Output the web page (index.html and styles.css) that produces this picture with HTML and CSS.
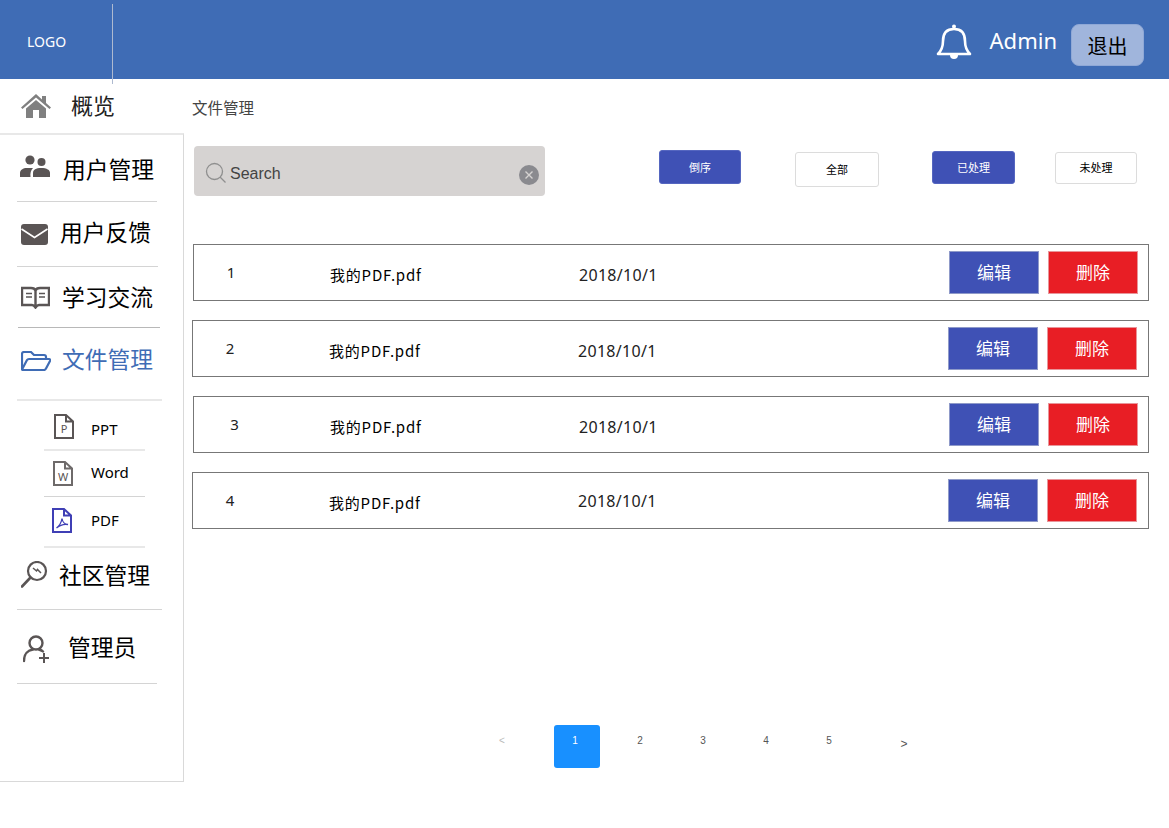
FILE: index.html
```html
<!DOCTYPE html>
<html lang="zh-CN">
<head>
  <meta charset="UTF-8">
  <title>文件管理</title>
  <link rel="stylesheet" href="styles.css">
</head>
<body>
  <!-- Header -->
  <div class="header">
    <div class="logo">LOGO</div>
    <div class="header-line"></div>
    <svg class="bell" width="36" height="38" viewBox="0 0 36 38">
      <path d="M2 31 C6 27 7 24 7 18 C7 10 11 6 18 6 C25 6 29 10 29 18 C29 24 30 27 34 31 Z" fill="none" stroke="#fff" stroke-width="2.6" stroke-linejoin="round"/>
      <circle cx="18" cy="3.6" r="2" fill="#fff"/>
      <path d="M14 32 a4 4 0 0 0 8 0 Z" fill="#fff"/>
    </svg>
    <span class="admin-name">Admin</span>
    <button class="logout">退出</button>
  </div>

  <div class="main">
    <!-- Sidebar -->
    <div class="sidebar">
      <div class="nav-home">
        <svg width="30" height="24" viewBox="0 0 30 24">
          <path d="M15 0 L0 13.5 L1.5 15 L15 3.5 L28.5 15 L30 13.5 L25 9 V2 H21 V5.5 Z" fill="#808080"/>
          <path d="M5 14.5 L15 6 L25 14.5 V24 H18 V16 H12 V24 H5 Z" fill="#808080"/>
        </svg>
        <span>概览</span>
      </div>
      <div class="nav-box">
        <div class="nav-item nav-users">
          <svg width="30" height="22" viewBox="0 0 30 22">
            <circle cx="10" cy="5" r="4.6" fill="#5a5555"/>
            <circle cx="21.5" cy="7" r="4" fill="#5a5555"/>
            <path d="M0 22 V18 C0 15 3 13 7 13 H13 C11 15 10 18 10.5 22 Z" fill="#5a5555"/>
            <path d="M13 22 V18 C13 14.500 16 13 21 13 C27 13 30 15 30 18 V22 Z" fill="#5a5555"/>
          </svg>
          <span>用户管理</span>
        </div>
        <div class="nav-item nav-feedback">
          <svg width="27" height="21" viewBox="0 0 27 21">
            <rect width="27" height="21" rx="3" fill="#5a5555"/>
            <path d="M0.500 5 L13.500 13.500 L26.500 5" fill="none" stroke="#fff" stroke-width="1.6"/>
          </svg>
          <span>用户反馈</span>
        </div>
        <div class="nav-item nav-study">
          <svg width="29" height="23" viewBox="0 0 29 23">
            <path d="M1 2 H10 C12 2 14 3 14.500 4.500 C15 3 17 2 19 2 H28 V19 H18 C16.500 19 15.500 20 14.500 21.500 C13.500 20 12.500 19 11 19 H1 Z M14.500 4.500 V21" fill="none" stroke="#5a5555" stroke-width="2.400"/>
            <path d="M5 7.500 H11 M5 11 H11 M18 7.500 H24 M18 11 H24" stroke="#5a5555" stroke-width="1.500"/>
          </svg>
          <span>学习交流</span>
        </div>
        <div class="nav-item nav-files">
          <svg width="30" height="20" viewBox="0 0 30 20">
            <path d="M1 18 V3 C1 2 2 1 3 1 H10 L13 4 H23 C24 4 25 5 25 6 V8" fill="none" stroke="#3f6cb5" stroke-width="2.200" stroke-linejoin="round"/>
            <path d="M1 18.500 L6 9 C6.500 8 7 8 8 8 H28 C29 8 29.500 9 29 10 L25 17.500 C24.500 18.500 24 19 23 19 H2 C1.500 19 1 19 1 18.500 Z" fill="none" stroke="#3f6cb5" stroke-width="2.200" stroke-linejoin="round"/>
          </svg>
          <span class="nav-active">文件管理</span>
        </div>
        <div class="sub-item sub-ppt">
          <svg width="20" height="25" viewBox="0 0 20 25">
            <path d="M1 1 H12 L19 7.500 V24 H1 Z M12 1 V7.500 H19" fill="none" stroke="#5a5555" stroke-width="2"/>
            <text x="10" y="19" class="file-letter" fill="#5a5555">P</text>
          </svg>
          <span>PPT</span>
        </div>
        <div class="sub-item sub-word">
          <svg width="20" height="25" viewBox="0 0 20 25">
            <path d="M1 1 H12 L19 7.500 V24 H1 Z M12 1 V7.500 H19" fill="none" stroke="#6e6a6a" stroke-width="2"/>
            <text x="10" y="20" class="file-letter" fill="#5a5555">W</text>
          </svg>
          <span>Word</span>
        </div>
        <div class="sub-item sub-pdf">
          <svg width="20" height="25" viewBox="0 0 20 25">
            <path d="M1 1 H12 L19 7.500 V24 H1 Z M12 1 V7.500 H19" fill="none" stroke="#3f3fb5" stroke-width="2"/>
            <path d="M4.500 20 C7 18 9.500 14 10 10.500 C10.500 14 13 16.500 16 16.500 C13 16 8 17 4.500 20 Z" fill="none" stroke="#3f3fb5" stroke-width="1.300"/>
          </svg>
          <span>PDF</span>
        </div>
        <div class="nav-item nav-community">
          <svg width="27" height="27" viewBox="0 0 27 27">
            <circle cx="16" cy="10" r="9" fill="none" stroke="#5a5555" stroke-width="2.200"/>
            <path d="M9.500 16.500 L1 25.500" stroke="#5a5555" stroke-width="2.600" stroke-linecap="round"/>
            <path d="M12 7 L15.500 10 L16.500 8.500 L20 12" fill="none" stroke="#5a5555" stroke-width="1.500"/>
          </svg>
          <span>社区管理</span>
        </div>
        <div class="nav-item nav-manager">
          <svg width="26" height="28" viewBox="0 0 26 28">
            <circle cx="13" cy="8" r="6.500" fill="none" stroke="#5a5555" stroke-width="2.400"/>
            <path d="M1 26 C1 19 5 15 10 14.500 M16 14.500 C17.500 15 19 15.500 20 16.500" fill="none" stroke="#5a5555" stroke-width="2.400" stroke-linecap="round"/>
            <path d="M21 18 V28 M16 23 H26" stroke="#5a5555" stroke-width="2"/>
          </svg>
          <span>管理员</span>
        </div>
      </div>
    </div>

    <!-- Content -->
    <div class="content">
      <div class="crumb">文件管理</div>

      <div class="toolbar">
        <div class="search">
          <svg width="22" height="22" viewBox="0 0 22 22">
            <circle cx="9.500" cy="9.500" r="8" fill="none" stroke="#8f8f8f" stroke-width="1.300"/>
            <path d="M15 15 L20.500 20.500" stroke="#8f8f8f" stroke-width="1.300"/>
          </svg>
          <span class="search-text">Search</span>
          <svg class="search-clear" width="20" height="20" viewBox="0 0 20 20">
            <circle cx="10" cy="10" r="10" fill="#8a8a8f"/>
            <path d="M6.500 6.500 L13.500 13.500 M13.500 6.500 L6.500 13.500" stroke="#d6d3d2" stroke-width="1.400"/>
          </svg>
        </div>
        <button class="tool-btn tool-sort">倒序</button>
        <button class="tool-btn tool-all">全部</button>
        <button class="tool-btn tool-done">已处理</button>
        <button class="tool-btn tool-todo">未处理</button>
      </div>

      <div class="file-list">
        <div class="file-row">
          <div class="row-num">1</div>
          <div class="row-name">我的PDF.pdf</div>
          <div class="row-date">2018/10/1</div>
          <button class="row-btn btn-edit">编辑</button>
          <button class="row-btn btn-del">删除</button>
        </div>
        <div class="file-row">
          <div class="row-num">2</div>
          <div class="row-name">我的PDF.pdf</div>
          <div class="row-date">2018/10/1</div>
          <button class="row-btn btn-edit">编辑</button>
          <button class="row-btn btn-del">删除</button>
        </div>
        <div class="file-row">
          <div class="row-num">3</div>
          <div class="row-name">我的PDF.pdf</div>
          <div class="row-date">2018/10/1</div>
          <button class="row-btn btn-edit">编辑</button>
          <button class="row-btn btn-del">删除</button>
        </div>
        <div class="file-row">
          <div class="row-num">4</div>
          <div class="row-name">我的PDF.pdf</div>
          <div class="row-date">2018/10/1</div>
          <button class="row-btn btn-edit">编辑</button>
          <button class="row-btn btn-del">删除</button>
        </div>
      </div>

      <div class="pager">
        <span class="page page-prev">&lt;</span>
        <span class="page page-current">1</span>
        <span class="page page-two">2</span>
        <span class="page">3</span>
        <span class="page">4</span>
        <span class="page">5</span>
        <span class="page page-next">&gt;</span>
      </div>
    </div>
  </div>
</body>
</html>
```

FILE: styles.css
```css
body {
  margin: 0;
  padding: 0;
  background-color: #fff;
  color: #000;
  font-family: "Noto Sans CJK SC", "Noto Sans", sans-serif;
}
button {
  font-family: inherit;
  cursor: pointer;
}

/* Header */
.header {
  position: relative;
  height: 79px;
  display: flex;
  align-items: center;
  background-color: #3f6cb5;
  color: #fff;
}
.logo {
  margin-left: 27px;
  margin-top: 4px;
  font-family: "Noto Sans", sans-serif;
  font-size: 14px;
}
.header-line {
  position: absolute;
  left: 112px;
  top: 4px;
  width: 1px;
  height: 80px;
  background-color: #aebad0;
}
.bell {
  margin-left: auto;
  margin-right: 18px;
  margin-top: 5px;
}
.admin-name {
  margin-right: 14px;
  font-family: "Noto Sans", sans-serif;
  font-size: 22px;
}
.logout {
  width: 73px;
  height: 42px;
  margin-right: 25px;
  margin-top: 11px;
  padding: 0;
  border: 1px solid #8fa8d6;
  border-radius: 8px;
  background-color: #a0b5dc;
  color: #000;
  font-size: 20px;
}

.main {
  display: flex;
}

/* Sidebar */
.sidebar {
  width: 184px;
  flex-shrink: 0;
}
.nav-home {
  height: 54px;
  display: flex;
  align-items: center;
  padding-left: 21px;
  font-size: 22px;
  color: #222;
}
.nav-home span {
  margin-left: 20px;
  margin-bottom: 4px;
}
.nav-box {
  height: 646px;
  box-sizing: content-box;
  border-top: 2px solid #e8e8e8;
  border-right: 1px solid #d9d9d9;
  border-bottom: 1px solid #d9d9d9;
  width: 183px;
}
.nav-item {
  box-sizing: border-box;
  display: flex;
  align-items: center;
  margin-left: 17px;
  font-size: 22.750px;
  line-height: 30px;
  border-bottom: 1px solid #d4d4d4;
}
.nav-active {
  color: #3f6cb5;
}
.nav-users {
  width: 140px;
  height: 67px;
  padding: 1px 0 0 3px;
}
.nav-users svg {
  margin-bottom: 6px;
}
.nav-users span {
  margin-left: 13px;
}
.nav-feedback {
  width: 141px;
  height: 65px;
  padding: 0 0 5px 4px;
  margin-left: 17px;
}
.nav-feedback svg {
  margin-top: 5px;
}
.nav-feedback span {
  margin-left: 12px;
}
.nav-study {
  width: 142px;
  height: 61px;
  margin-left: 18px;
  padding: 0 0 0 3px;
  border-bottom-color: #b8b8b8;
}
.nav-study span {
  margin-left: 12px;
}
.nav-files {
  width: 145px;
  height: 73px;
  padding: 0 0 9px 4px;
  border-bottom: 2px solid #e8e8e8;
}
.nav-files svg {
  margin-top: 4px;
}
.nav-files span {
  margin-left: 11px;
}
.nav-community {
  width: 145px;
  height: 62px;
  padding: 0 0 8px 4px;
}
.nav-community span {
  margin-left: 11px;
}
.nav-manager {
  width: 140px;
  height: 74px;
  padding: 0 0 0 6px;
}
.nav-manager svg {
  margin-top: 5px;
}
.nav-manager span {
  margin-left: 19px;
}

.sub-item {
  box-sizing: border-box;
  width: 101px;
  margin-left: 44px;
  display: flex;
  align-items: center;
  font-family: "Noto Sans", sans-serif;
  font-size: 15px;
  border-bottom: 1px solid #d4d4d4;
}
.file-letter {
  font-family: "Noto Sans", sans-serif;
  font-size: 11px;
  text-anchor: middle;
}
.sub-ppt {
  height: 50px;
  padding-left: 10px;
  border-bottom: 2px solid #e8e8e8;
}
.sub-ppt svg {
  margin-top: 2px;
}
.sub-ppt span {
  margin-left: 17px;
  margin-top: 8px;
}
.sub-word {
  height: 46px;
  padding-left: 9px;
}
.sub-word span {
  margin-left: 18px;
  margin-bottom: 4px;
}
.sub-pdf {
  height: 51px;
  padding-left: 8px;
  border-bottom: 2px solid #e8e8e8;
}
.sub-pdf svg {
  margin-bottom: 2px;
}
.sub-pdf span {
  margin-left: 19px;
  margin-bottom: 3px;
}

/* Content */
.content {
  flex: 1;
  min-width: 0;
}
.crumb {
  height: 67px;
  padding: 16px 0 0 8px;
  box-sizing: border-box;
  font-size: 15.500px;
  line-height: 24px;
  color: #444;
}
.toolbar {
  display: flex;
  align-items: flex-start;
  margin-left: 10px;
}
.search {
  box-sizing: border-box;
  width: 351px;
  height: 50px;
  display: flex;
  align-items: center;
  padding: 4px 6px 0 11px;
  border-radius: 4px;
  background-color: #d6d3d2;
}
.search-text {
  margin-left: 3px;
  margin-top: 2px;
  font-family: "Liberation Sans", sans-serif;
  font-size: 16px;
  color: #444;
}
.search-clear {
  margin-left: auto;
  margin-top: 4px;
}
.tool-btn {
  padding: 0;
  border-radius: 3px;
  font-size: 11px;
}
.tool-sort, .tool-done {
  border: 1px solid #5566c0;
  background-color: #3f51b5;
  color: #fff;
}
.tool-all, .tool-todo {
  border: 1px solid #dcdcdc;
  background-color: #fff;
  color: #000;
}
.tool-sort {
  width: 82px;
  height: 34px;
  margin: 4px 0 0 114px;
}
.tool-all {
  width: 84px;
  height: 35px;
  margin: 6px 0 0 54px;
  padding-bottom: 2px;
}
.tool-done {
  width: 83px;
  height: 33px;
  margin: 5px 0 0 53px;
  padding-bottom: 2px;
}
.tool-todo {
  width: 82px;
  height: 32px;
  margin: 6px 0 0 40px;
  padding-bottom: 2px;
}

.file-list {
  display: flex;
  flex-direction: column;
  gap: 19px;
  margin-top: 48px;
}
.file-row {
  box-sizing: border-box;
  width: 956px;
  height: 57px;
  margin-left: 9px;
  display: flex;
  align-items: center;
  border: 1px solid #777;
}
.file-row:nth-child(even) {
  margin-left: 8px;
  width: 957px;
}
.row-num {
  box-sizing: border-box;
  width: 74px;
  margin-bottom: 1px;
  text-align: center;
  font-family: "Noto Sans", sans-serif;
  font-size: 15px;
  color: #222;
}
.file-row:nth-child(3) .row-num {
  padding-left: 7px;
}
.row-name {
  width: 249px;
  margin-left: 62px;
  margin-top: 4px;
  font-size: 15px;
  letter-spacing: 0.8px;
}
.row-date {
  width: 370px;
  margin-top: 4px;
  font-family: "Noto Sans", sans-serif;
  font-size: 16px;
  letter-spacing: 0.3px;
  color: #222;
}
.file-row:nth-child(4) .row-date {
  margin-top: 0;
}
.row-btn {
  width: 90px;
  height: 43px;
  padding: 0 0 3px;
  color: #fff;
  font-size: 17px;
}
.btn-edit {
  border: 1px solid #8f9ac9;
  background-color: #3f51b5;
}
.btn-del {
  margin-left: 9px;
  padding-bottom: 2px;
  border: 1px solid #e8959a;
  background-color: #e81e25;
}

/* Pagination */
.pager {
  display: flex;
  gap: 43px;
  margin-top: 196px;
  margin-left: 308px;
  height: 43px;
  font-family: "Liberation Sans", sans-serif;
  font-size: 10px;
  color: #555;
}
.page {
  width: 20px;
  text-align: center;
  margin-top: 10px;
}
.page-prev {
  margin-right: -1px;
  color: #bbb;
}
.page-current {
  box-sizing: border-box;
  width: 46px;
  margin-top: 0;
  padding: 10px 4px 0 0;
  border-radius: 3px;
  background-color: #1890ff;
  color: #fff;
}
.page-two {
  margin-left: -13px;
}
.page-next {
  margin-left: 12px;
  margin-top: 12px;
  font-size: 12px;
}
```
